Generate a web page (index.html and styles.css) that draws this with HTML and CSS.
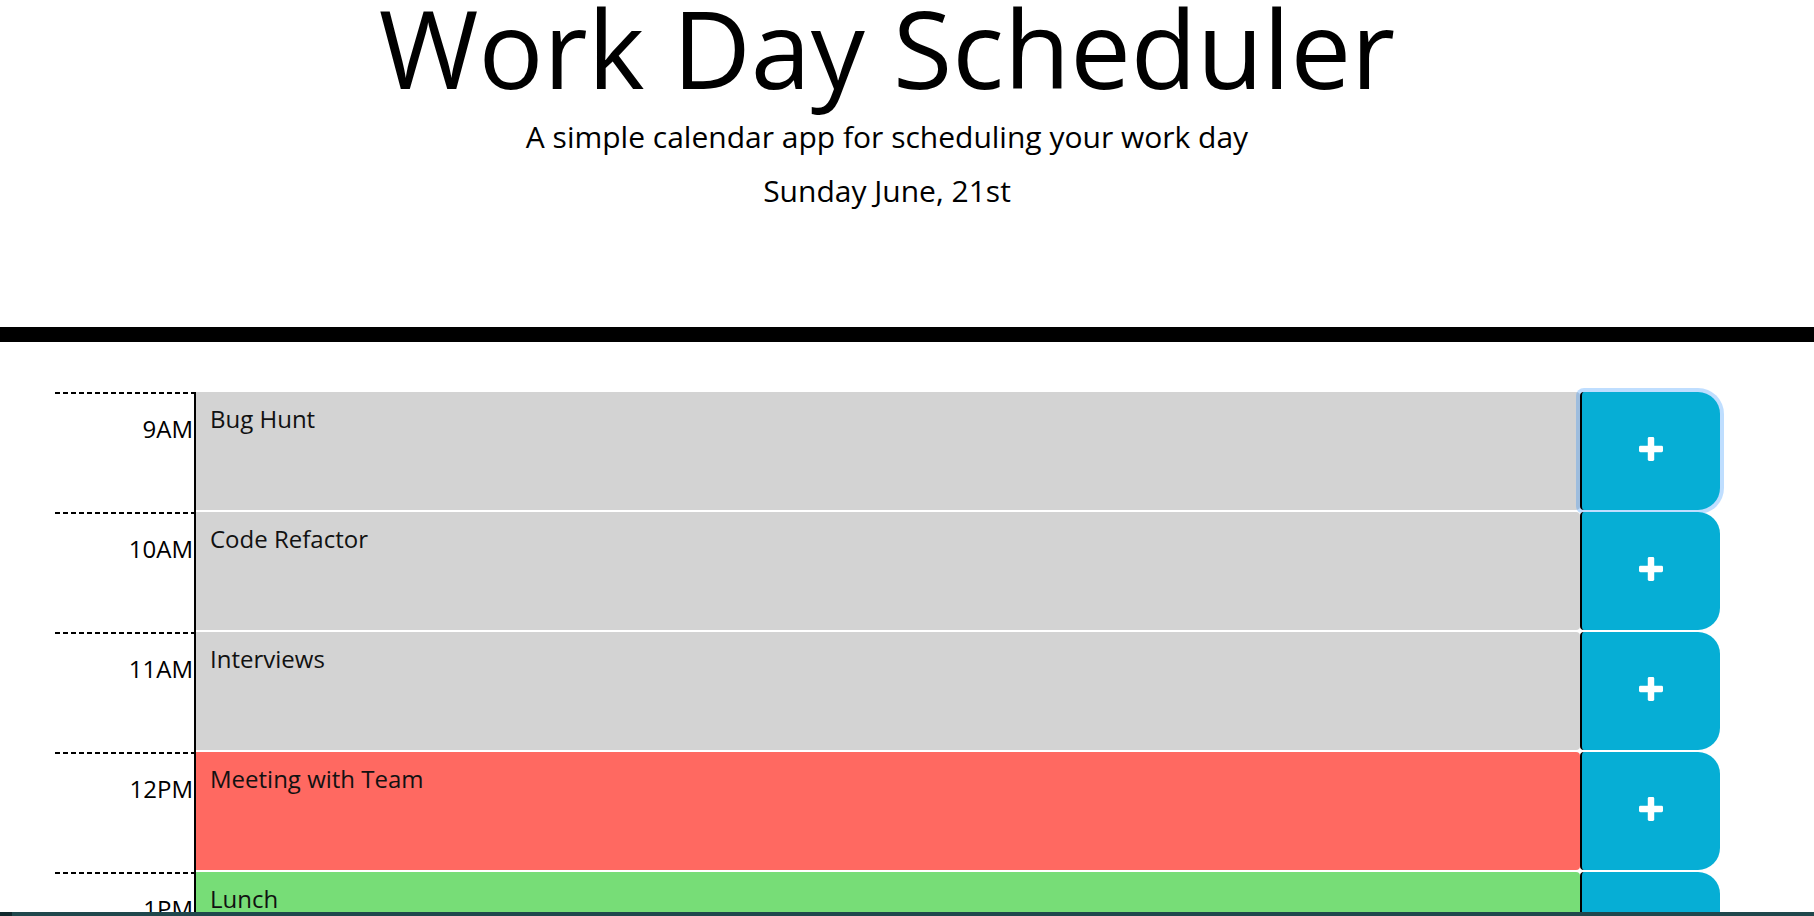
FILE: index.html
```html
<!DOCTYPE html>
<html lang="en">
<head>
<meta charset="utf-8">
<title>Work Day Scheduler</title>
<link rel="stylesheet" href="styles.css">
</head>
<body>
<header class="jumbotron">
  <h1 class="title">Work Day Scheduler</h1>
  <p class="lead">A simple calendar app for scheduling your work day</p>
  <p class="lead date">Sunday June, 21st</p>
</header>

<main class="schedule">
  <div class="time-row">
    <div class="hour">9AM</div>
    <textarea class="description past">Bug Hunt</textarea>
    <button class="save-btn focused" aria-label="Save">
      <svg class="plus" viewBox="0 0 26 26"><rect x="9.5" y="0" width="7" height="26" rx="1.5"/><rect x="0" y="9.5" width="26" height="7" rx="1.5"/></svg>
    </button>
  </div>
  <div class="time-row">
    <div class="hour">10AM</div>
    <textarea class="description past">Code Refactor</textarea>
    <button class="save-btn" aria-label="Save">
      <svg class="plus" viewBox="0 0 26 26"><rect x="9.5" y="0" width="7" height="26" rx="1.5"/><rect x="0" y="9.5" width="26" height="7" rx="1.5"/></svg>
    </button>
  </div>
  <div class="time-row">
    <div class="hour">11AM</div>
    <textarea class="description past">Interviews</textarea>
    <button class="save-btn" aria-label="Save">
      <svg class="plus" viewBox="0 0 26 26"><rect x="9.5" y="0" width="7" height="26" rx="1.5"/><rect x="0" y="9.5" width="26" height="7" rx="1.5"/></svg>
    </button>
  </div>
  <div class="time-row">
    <div class="hour">12PM</div>
    <textarea class="description present">Meeting with Team</textarea>
    <button class="save-btn" aria-label="Save">
      <svg class="plus" viewBox="0 0 26 26"><rect x="9.5" y="0" width="7" height="26" rx="1.5"/><rect x="0" y="9.5" width="26" height="7" rx="1.5"/></svg>
    </button>
  </div>
  <div class="time-row">
    <div class="hour">1PM</div>
    <textarea class="description future">Lunch</textarea>
    <button class="save-btn" aria-label="Save">
      <svg class="plus" viewBox="0 0 26 26"><rect x="9.5" y="0" width="7" height="26" rx="1.5"/><rect x="0" y="9.5" width="26" height="7" rx="1.5"/></svg>
    </button>
  </div>
  <div class="time-row">
    <div class="hour">2PM</div>
    <textarea class="description future"></textarea>
    <button class="save-btn" aria-label="Save">
      <svg class="plus" viewBox="0 0 26 26"><rect x="9.5" y="0" width="7" height="26" rx="1.5"/><rect x="0" y="9.5" width="26" height="7" rx="1.5"/></svg>
    </button>
  </div>
  <div class="time-row">
    <div class="hour">3PM</div>
    <textarea class="description future"></textarea>
    <button class="save-btn" aria-label="Save">
      <svg class="plus" viewBox="0 0 26 26"><rect x="9.5" y="0" width="7" height="26" rx="1.5"/><rect x="0" y="9.5" width="26" height="7" rx="1.5"/></svg>
    </button>
  </div>
</main>

<div class="taskbar-edge"></div>
</body>
</html>
```

FILE: styles.css
```css
html {
  overflow: hidden;
}

body {
  margin: 0;
  font-family: "Open Sans", "Liberation Sans", sans-serif;
  color: #000;
  background: #fff;
}

.jumbotron {
  text-align: center;
  padding: 0 40px 114px 0;
  border-bottom: 15px solid #000;
}

.title {
  margin: 0;
  font-size: 108px;
  font-weight: 400;
  line-height: 96px;
}

.lead {
  margin: 18px 0 0;
  font-size: 30px;
  line-height: 45px;
  font-weight: 400;
}

.lead.date {
  margin-top: 9px;
}

.schedule {
  margin: 50px 0 0 55px;
  width: 1665px;
}

.time-row {
  display: flex;
  align-items: flex-start;
  height: 120px;
}

.hour {
  box-sizing: border-box;
  width: 141px;
  height: 120px;
  padding: 20px 1px 0 0;
  text-align: right;
  font-size: 24px;
  line-height: 33px;
  border-right: 2px solid #000;
  background-image: repeating-linear-gradient(to right, #000 0 5px, transparent 5px 8px);
  background-size: 100% 2px;
  background-repeat: no-repeat;
  background-position: left top;
}

.description {
  box-sizing: border-box;
  flex: 1;
  height: 118px;
  margin: 0;
  padding: 10px 14px;
  border: none;
  border-radius: 0 4px 4px 0;
  resize: none;
  overflow: hidden;
  font-family: "Open Sans", "Liberation Sans", sans-serif;
  font-size: 24px;
  line-height: 33px;
  color: #111;
  outline: none;
}

.past {
  background-color: #d3d3d3;
}

.present {
  background-color: #ff6961;
}

.future {
  background-color: #77dd77;
}

.save-btn {
  box-sizing: border-box;
  width: 140px;
  height: 118px;
  margin: 0;
  padding: 0 0 4px;
  border: none;
  border-left: 2px solid #000;
  border-radius: 4px 22px 22px 4px;
  background-color: #06aed5;
  display: flex;
  align-items: center;
  justify-content: center;
  cursor: pointer;
}

.save-btn.focused {
  box-shadow: 0 0 0 4px rgba(0, 123, 255, 0.25);
}

.plus {
  width: 24px;
  height: 24px;
  fill: #fff;
}

.taskbar-edge {
  position: fixed;
  left: 0;
  right: 0;
  bottom: 0;
  height: 4px;
  background: linear-gradient(to right, #10282c 0 12px, #1f474c 12px);
}
```
